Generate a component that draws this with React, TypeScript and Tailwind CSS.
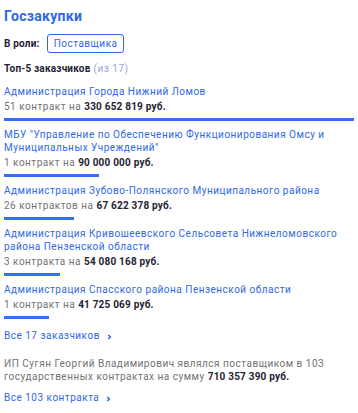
import React from 'react';

type Customer = { name: string; count: string; sum: string; bar: number };

const customers: Customer[] = [
  { name: 'Администрация Города Нижний Ломов', count: '51 контракт', sum: '330 652 819 руб.', bar: 350 },
  { name: 'МБУ "Управление по Обеспечению Функционирования Омсу и Муниципальных Учреждений"', count: '1 контракт', sum: '90 000 000 руб.', bar: 95 },
  { name: 'Администрация Зубово-Полянского Муниципального района', count: '26 контрактов', sum: '67 622 378 руб.', bar: 70 },
  { name: 'Администрация Кривошеевского Сельсовета Нижнеломовского района Пензенской области', count: '3 контракта', sum: '54 080 168 руб.', bar: 56 },
  { name: 'Администрация Спасского района Пензенской области', count: '1 контракт', sum: '41 725 069 руб.', bar: 45 },
];

const Chevron = () => (
  <svg width="5" height="6" viewBox="0 0 5 6" className="ml-[7px] mt-[2px] inline-block">
    <path d="M1.2 1 L3.4 3 L1.2 5" fill="none" stroke="#3068e4" strokeWidth="1.4" />
  </svg>
);

const App: React.FC = () => {
  return (
    <div className="w-[358px] h-[413px] bg-white px-1 pt-[6px] text-[10px] leading-[13px] tracking-[0.5px] text-[#727272]" style={{ fontFamily: 'Roboto, "Noto Sans", sans-serif' }}>
      <h2 className="text-[14px] leading-[20px] font-bold tracking-[0.3px] text-[#3068e4]">Госзакупки</h2>

      <div className="mt-[8px] flex items-center gap-[7px]">
        <span className="font-bold tracking-[0.2px] text-[#1f2333]">В роли:</span>
        <span className="rounded-[3px] border border-[#3068e4] px-[6px] py-[2px] text-[#3068e4]">Поставщика</span>
      </div>

      <div className="mt-[9px]">
        <span className="font-bold tracking-[0.2px] text-[#1f2333]">Топ-5 заказчиков</span>{' '}
        <span className="text-[#94a6d8]">(из 17)</span>
      </div>

      <div className="mt-[10px] flex flex-col gap-[7px]">
        {customers.map(c => (
          <div key={c.name} className="flex flex-col">
            <a className="text-[#3068e4]">{c.name}</a>
            <div className="mt-[2px]">
              {c.count} на <span className="font-bold tracking-[0.2px] text-[#1f2333]">{c.sum}</span>
            </div>
            <div className="mt-[5px] h-[3px] bg-[#3570f0]" style={{ width: c.bar }} />
          </div>
        ))}
      </div>

      <a className="mt-[10px] flex items-center text-[#3068e4]">
        Все 17 заказчиков <Chevron />
      </a>

      <p className="mt-[15px]">
        ИП Сугян Георгий Владимирович являлся поставщиком в 103 государственных контрактах на сумму{' '}
        <span className="font-bold tracking-[0.2px] text-[#1f2333]">710 357 390 руб.</span>
      </p>

      <a className="mt-[8px] flex items-center text-[#3068e4]">
        Все 103 контракта <Chevron />
      </a>
    </div>
  );
};

export default App;
